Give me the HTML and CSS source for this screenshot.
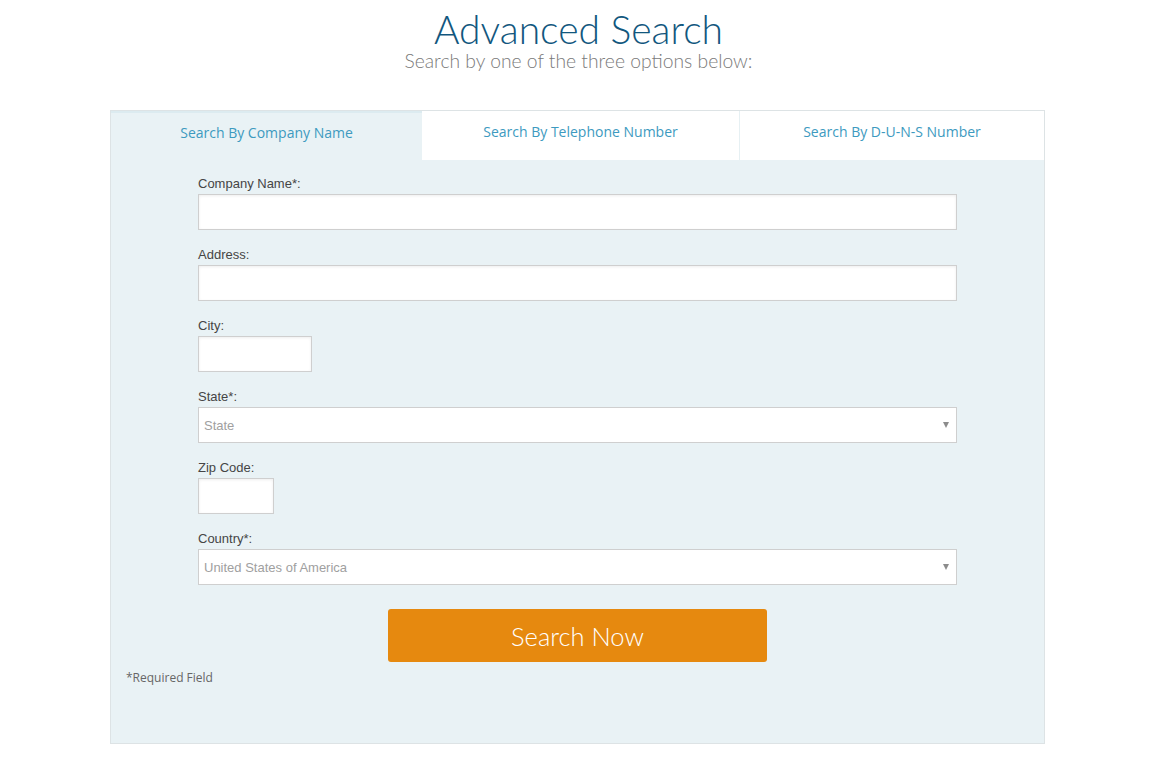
FILE: index.html
```html
<!DOCTYPE html>
<html lang="en">
<head>
<meta charset="utf-8">
<title>Advanced Search</title>
<link rel="stylesheet" href="styles.css">
</head>
<body>
<header class="head">
  <h1 class="title">Advanced Search</h1>
  <p class="subtitle">Search by one of the three options below:</p>
</header>
<section class="panel">
  <nav class="tabs">
    <div class="tab tab-active">Search By Company Name</div>
    <div class="tab tab-mid">Search By Telephone Number</div>
    <div class="tab tab-last">Search By D-U-N-S Number</div>
  </nav>
  <form class="form">
    <div class="field">
      <label class="label">Company Name*:</label>
      <input class="input" type="text">
    </div>
    <div class="field">
      <label class="label">Address:</label>
      <input class="input" type="text">
    </div>
    <div class="field">
      <label class="label">City:</label>
      <input class="input input-city" type="text">
    </div>
    <div class="field">
      <label class="label">State*:</label>
      <div class="select"><span class="select-text">State</span><span class="caret"></span></div>
    </div>
    <div class="field">
      <label class="label">Zip Code:</label>
      <input class="input input-zip" type="text">
    </div>
    <div class="field">
      <label class="label">Country*:</label>
      <div class="select"><span class="select-text">United States of America</span><span class="caret"></span></div>
    </div>
    <div class="actions">
      <button class="btn" type="button">Search Now</button>
    </div>
  </form>
  <p class="required">*Required Field</p>
</section>
</body>
</html>
```
FILE: styles.css
```css
* { box-sizing: border-box; }
body {
  margin: 0;
  background: #fff;
  font-family: "Liberation Sans", Arial, sans-serif;
}
.head {
  text-align: center;
  padding-top: 12px;
}
.title {
  margin: 0;
  font-family: Lato, "Open Sans", sans-serif;
  font-weight: 300;
  font-size: 39px;
  line-height: 35px;
  color: #12577e;
}
.subtitle {
  margin: 2px 0 0;
  font-family: Lato, "Open Sans", sans-serif;
  font-weight: 300;
  font-size: 19.3px;
  line-height: 24px;
  color: #7a7a7a;
}
.panel {
  width: 935px;
  margin: 37px 0 0 110px;
  background: #e9f2f5;
  border: 1px solid #dde3e5;
  height: 634px;
}
.tabs {
  display: flex;
  height: 49px;
}
.tab {
  display: flex;
  align-items: center;
  justify-content: center;
  font-family: "Open Sans", sans-serif;
  font-size: 14px;
  color: #3d9ac0;
  padding-bottom: 9px;
}
.tab-active {
  width: 311px;
  border-top: 2px solid #dcebf0;
}
.tab-mid {
  width: 318px;
  background: #fff;
  border-right: 1px solid #e6f0f3;
}
.tab-last {
  flex: 1;
  background: #fff;
}
.form {
  width: 759px;
  margin: 0 0 0 87px;
  padding-top: 16px;
}
.field {
  margin-bottom: 17px;
}
.label {
  display: block;
  font-size: 13px;
  line-height: 16px;
  color: #454545;
  margin-bottom: 2px;
}
.input {
  display: block;
  width: 100%;
  height: 36px;
  border: 1px solid #cfcfcf;
  background: #fff;
  box-shadow: inset 0 1px 3px rgba(0,0,0,0.07);
  margin: 0;
}
.input-city { width: 114px; }
.input-zip { width: 76px; }
.select {
  display: flex;
  align-items: center;
  justify-content: space-between;
  height: 36px;
  border: 1px solid #cfcfcf;
  background: #fff;
  padding: 0 7px 0 5px;
}
.select-text {
  font-size: 13px;
  color: #a0a0a0;
}
.caret {
  width: 0;
  height: 0;
  border-left: 3px solid transparent;
  border-right: 3px solid transparent;
  border-top: 6px solid #8c8c8c;
}
.actions {
  display: flex;
  justify-content: center;
  padding-top: 7px;
}
.btn {
  width: 379px;
  height: 53px;
  border: 0;
  border-radius: 3px;
  background: #e6890f;
  color: #fff;
  font-family: Lato, "Open Sans", sans-serif;
  font-weight: 300;
  font-size: 25.5px;
  cursor: pointer;
}
.required {
  margin: 8px 0 0 15px;
  font-family: "Open Sans", sans-serif;
  font-size: 12px;
  line-height: 16px;
  color: #666;
}
```
